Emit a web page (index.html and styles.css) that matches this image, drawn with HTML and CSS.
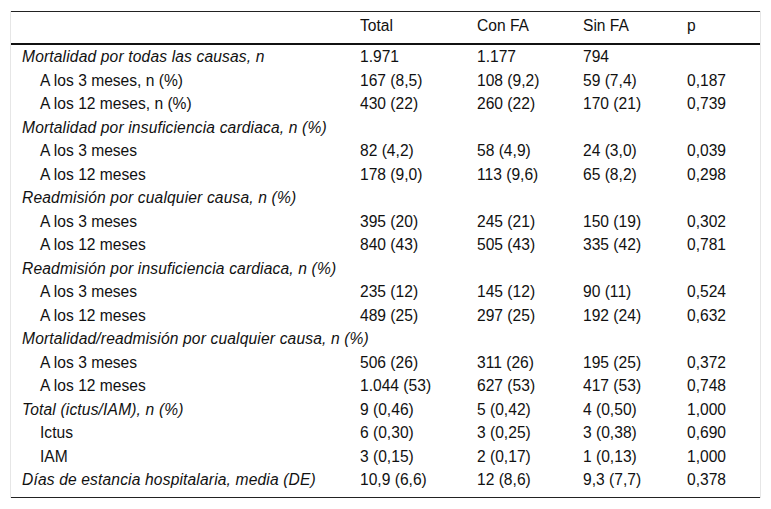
FILE: index.html
```html
<!DOCTYPE html>
<html lang="es">
<head>
<meta charset="utf-8">
<title>Tabla</title>
<link rel="stylesheet" href="styles.css">
</head>
<body>
<div class="frame">
<table class="data">
  <colgroup>
    <col class="c-label"><col class="c-total"><col class="c-con"><col class="c-sin"><col class="c-p">
  </colgroup>
  <thead>
    <tr><th></th><th>Total</th><th>Con FA</th><th>Sin FA</th><th>p</th></tr>
  </thead>
  <tbody>
    <tr class="grp"><td>Mortalidad por todas las causas, n</td><td>1.971</td><td>1.177</td><td>794</td><td></td></tr>
    <tr class="sub"><td>A los 3 meses, n (%)</td><td>167 (8,5)</td><td>108 (9,2)</td><td>59 (7,4)</td><td>0,187</td></tr>
    <tr class="sub"><td>A los 12 meses, n (%)</td><td>430 (22)</td><td>260 (22)</td><td>170 (21)</td><td>0,739</td></tr>
    <tr class="grp"><td>Mortalidad por insuficiencia cardiaca, n (%)</td><td></td><td></td><td></td><td></td></tr>
    <tr class="sub"><td>A los 3 meses</td><td>82 (4,2)</td><td>58 (4,9)</td><td>24 (3,0)</td><td>0,039</td></tr>
    <tr class="sub"><td>A los 12 meses</td><td>178 (9,0)</td><td>113 (9,6)</td><td>65 (8,2)</td><td>0,298</td></tr>
    <tr class="grp"><td>Readmisión por cualquier causa, n (%)</td><td></td><td></td><td></td><td></td></tr>
    <tr class="sub"><td>A los 3 meses</td><td>395 (20)</td><td>245 (21)</td><td>150 (19)</td><td>0,302</td></tr>
    <tr class="sub"><td>A los 12 meses</td><td>840 (43)</td><td>505 (43)</td><td>335 (42)</td><td>0,781</td></tr>
    <tr class="grp"><td>Readmisión por insuficiencia cardiaca, n (%)</td><td></td><td></td><td></td><td></td></tr>
    <tr class="sub"><td>A los 3 meses</td><td>235 (12)</td><td>145 (12)</td><td>90 (11)</td><td>0,524</td></tr>
    <tr class="sub"><td>A los 12 meses</td><td>489 (25)</td><td>297 (25)</td><td>192 (24)</td><td>0,632</td></tr>
    <tr class="grp"><td>Mortalidad/readmisión por cualquier causa, n (%)</td><td></td><td></td><td></td><td></td></tr>
    <tr class="sub"><td>A los 3 meses</td><td>506 (26)</td><td>311 (26)</td><td>195 (25)</td><td>0,372</td></tr>
    <tr class="sub"><td>A los 12 meses</td><td>1.044 (53)</td><td>627 (53)</td><td>417 (53)</td><td>0,748</td></tr>
    <tr class="grp"><td>Total (ictus/IAM), n (%)</td><td>9 (0,46)</td><td>5 (0,42)</td><td>4 (0,50)</td><td>1,000</td></tr>
    <tr class="sub"><td>Ictus</td><td>6 (0,30)</td><td>3 (0,25)</td><td>3 (0,38)</td><td>0,690</td></tr>
    <tr class="sub"><td>IAM</td><td>3 (0,15)</td><td>2 (0,17)</td><td>1 (0,13)</td><td>1,000</td></tr>
    <tr class="grp last"><td>Días de estancia hospitalaria, media (DE)</td><td>10,9 (6,6)</td><td>12 (8,6)</td><td>9,3 (7,7)</td><td>0,378</td></tr>
  </tbody>
</table>
</div>
</body>
</html>
```
FILE: styles.css
```css
html, body {
  margin: 0;
  padding: 0;
  background: #fff;
}
body {
  font-family: "Liberation Sans", Arial, sans-serif;
  font-size: 15.6px;
  color: #111;
}
.frame {
  margin: 11px 0 0 10px;
  width: 749px;
  border-left: 1px solid #e6e6e6;
  border-right: 1px solid #e6e6e6;
}
.data {
  width: 749px;
  border-collapse: collapse;
  table-layout: fixed;
  border-top: 1px solid #222;
  border-bottom: 1px solid #222;
}
.c-label { width: 338px; }
.c-total { width: 117px; }
.c-con { width: 106px; }
.c-sin { width: 104px; }
.c-p { width: 84px; }
.data th,
.data td {
  padding: 3px 0 3.5px 11px;
  line-height: 17px;
  text-align: left;
  white-space: nowrap;
  font-weight: normal;
}
.data thead th {
  padding-top: 5px;
  padding-bottom: 9px;
  border-bottom: 2px solid #111;
}
.data .grp td:first-child {
  font-style: italic;
  letter-spacing: 0.15px;
}
.data .sub td:first-child {
  padding-left: 29px;
}
.data .last td {
  padding-bottom: 9px;
}
```
